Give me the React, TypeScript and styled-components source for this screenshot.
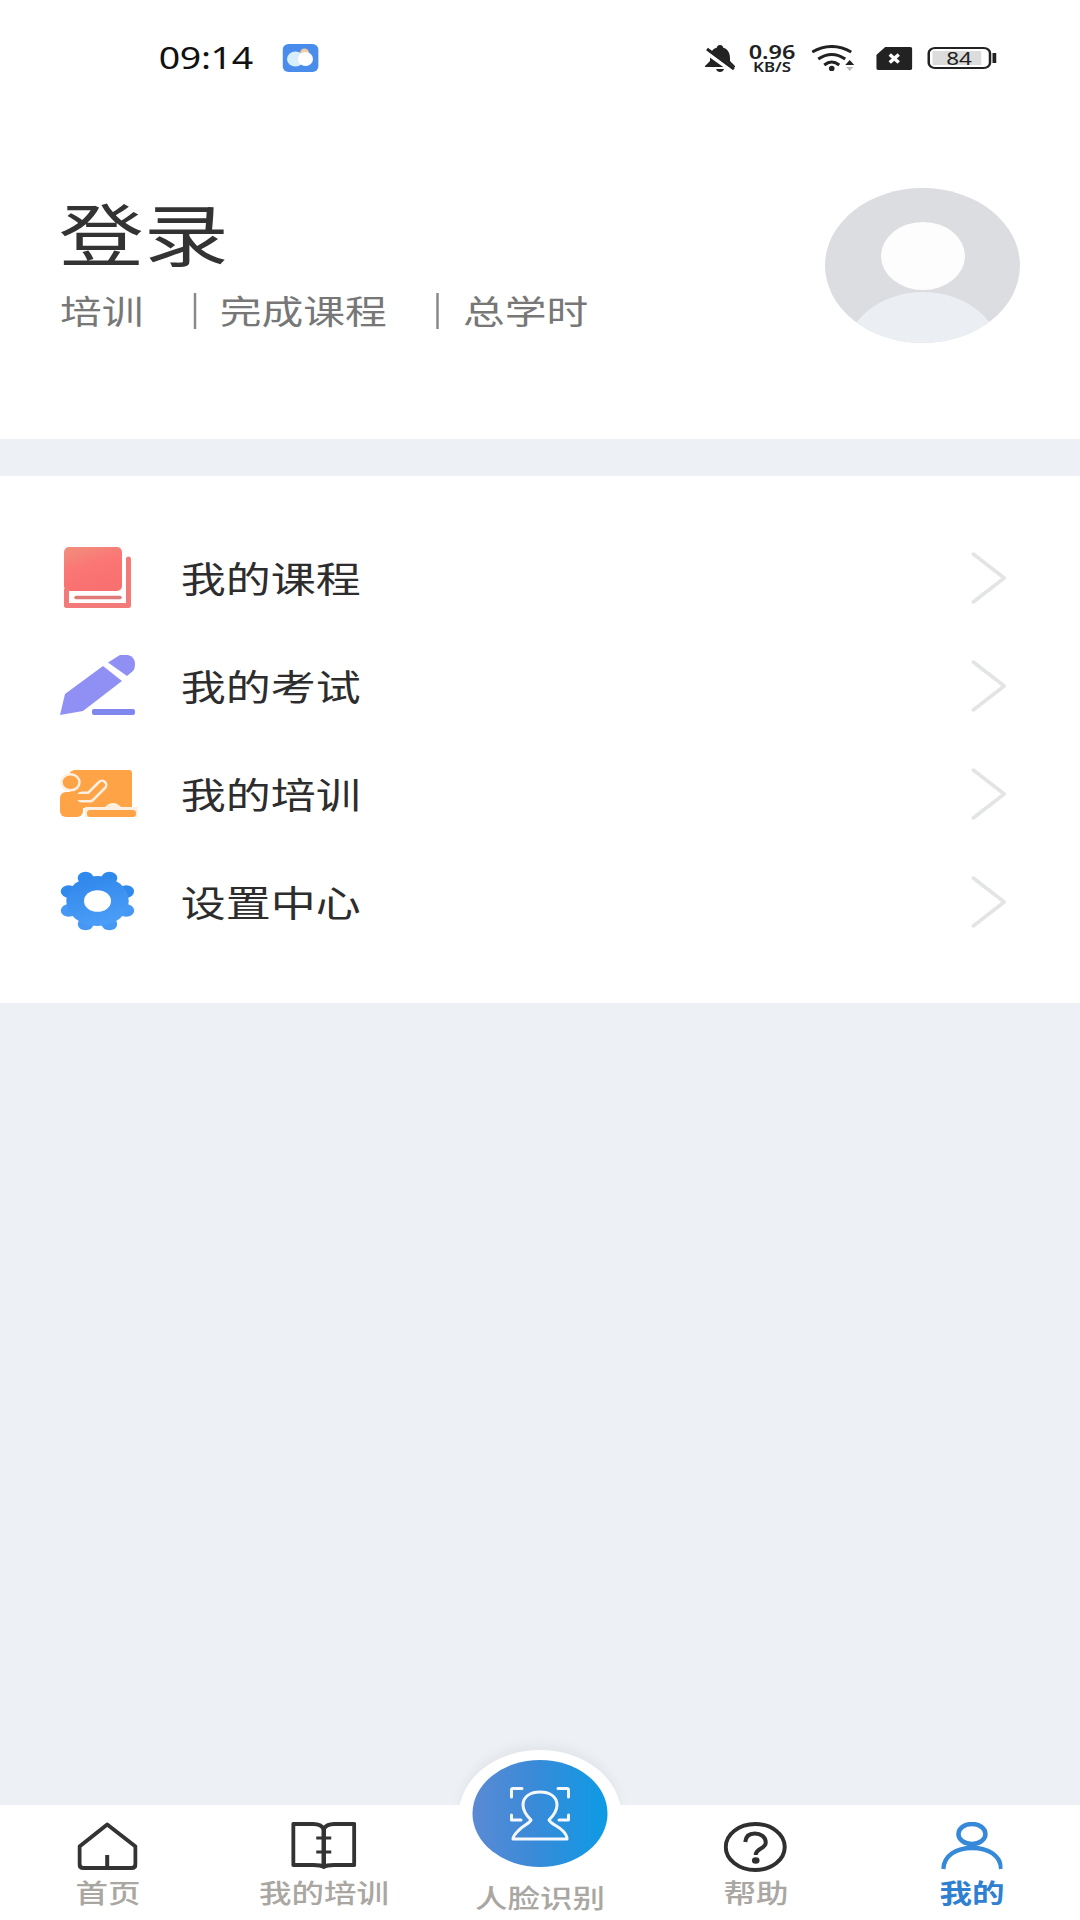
import React from "react";
import styled, { createGlobalStyle } from "styled-components";

const STRETCH = 1.25;
const SANS = `"Noto Sans", "Noto Sans CJK SC", sans-serif`;

const Global = createGlobalStyle`
  html, body { margin: 0; padding: 0; background: #fff; overflow: hidden; }
  * { box-sizing: border-box; }
`;

/* The reference is a phone capture widened by 1.25: the page is laid out at 864px and widened as a whole. */
const Page = styled.div`
  width: 864px;
  height: 1920px;
  display: flex;
  flex-direction: column;
  background: #edf0f5;
  font-family: ${SANS};
  transform: scaleX(${STRETCH});
  transform-origin: 0 0;
`;

const Top = styled.header`
  height: 439px;
  background: #fff;
  flex: none;
`;

const StatusBar = styled.div`
  height: 110px;
  padding: 44px 67px 0 127px;
  display: flex;
  justify-content: space-between;
  align-items: flex-start;
`;
const StatusGroup = styled.div<{ $gap: number }>`
  height: 28px;
  display: flex;
  align-items: center;
  gap: ${(p) => p.$gap}px;
`;
const Clock = styled.span`
  font-size: 30px;
  line-height: 28px;
  color: #111;
  letter-spacing: -0.3px;
`;
const BellSlot = styled.div`
  margin-right: -2px;
`;
const Speed = styled.div`
  width: 39px;
  display: flex;
  flex-direction: column;
  align-items: center;
  color: #222;
  font-weight: 600;
`;
const SpeedValue = styled.div`
  font-size: 18.8px;
  line-height: 18px;
`;
const SpeedUnit = styled.div`
  font-size: 13.5px;
  line-height: 12px;
`;
const WifiSlot = styled.div`
  margin-right: 5px;
`;
const Battery = styled.div`
  position: relative;
  width: 50.4px;
  height: 22px;
  margin-right: 4.5px;
  border: 2px solid #222;
  border-radius: 6px;
  display: flex;
  align-items: center;
  justify-content: center;
  font-size: 18px;
  line-height: 18px;
  color: #222;
  &::after {
    content: "";
    position: absolute;
    right: -6px;
    top: 4px;
    width: 2.4px;
    height: 10px;
    background: #222;
  }
`;
const Charge = styled.div<{ $level: number }>`
  position: absolute;
  left: 2px;
  top: 2px;
  bottom: 2px;
  width: ${(p) => p.$level}%;
  background: #dcdcdc;
`;
const BatteryValue = styled.span`
  position: relative;
`;

const Profile = styled.div`
  height: 329px;
  padding: 78px 48px 0 48px;
  display: flex;
  justify-content: space-between;
  align-items: flex-start;
`;
const Identity = styled.div`
  padding-top: 14px;
`;
const Title = styled.h1`
  margin: 0 0 0 -1px;
  font-size: 68px;
  line-height: 66px;
  font-weight: 400;
  color: #333;
`;
const Stats = styled.div`
  margin-top: 25px;
  display: flex;
`;
const Stat = styled.span`
  padding-right: 40px;
  font-size: 33.4px;
  line-height: 36px;
  color: #777;
  & + & {
    padding-left: 19px;
    border-left: 2px solid #8a8a8a;
  }
`;

const Menu = styled.nav`
  margin-top: 37px;
  padding: 48px 58px 47px 48px;
  background: #fff;
  flex: none;
`;
const Row = styled.div`
  height: 108px;
  display: flex;
  align-items: center;
`;
const RowIcon = styled.div`
  width: 96.6px;
  flex: none;
  display: flex;
`;
const RowLabel = styled.span`
  flex: 1;
  padding-top: 3px;
  font-size: 36px;
  line-height: 44px;
  color: #2d2d2d;
`;

const Spacer = styled.div`
  flex: 1;
`;

const TabBar = styled.footer`
  position: relative;
  height: 115px;
  flex: none;
  display: grid;
  grid-template-columns: repeat(5, 1fr);
  background: #fff;
`;
const Tab = styled.div`
  padding-top: 17px;
  display: flex;
  flex-direction: column;
  align-items: center;
`;
const TabIcon = styled.div`
  height: 52px;
  display: flex;
  align-items: flex-start;
`;
const TabLabel = styled.span<{ $active?: boolean }>`
  margin-top: 4px;
  font-size: 26px;
  line-height: 30px;
  font-weight: ${(p) => (p.$active ? 600 : 500)};
  color: ${(p) => (p.$active ? "#2f80d0" : "#aaa7a3")};
`;
const FaceTab = styled(Tab)`
  padding-top: 0;
`;
const Halo = styled.div`
  position: absolute;
  left: 50%;
  top: -55px;
  width: 130px;
  height: 130px;
  margin-left: -65px;
  border-radius: 50%;
  background: #fff;
  box-shadow: 0 -7px 9px rgba(0, 0, 0, 0.04);
  z-index: -1;
`;
const FaceButton = styled.div`
  width: 108px;
  height: 107px;
  margin-top: -45px;
  border-radius: 50%;
  display: flex;
  align-items: center;
  justify-content: center;
  background: linear-gradient(90deg, #5b8ad4 0%, #3a8ad8 45%, #0d9be5 100%);
`;
const FaceLabel = styled(TabLabel)`
  margin-top: 16px;
`;

/* Drawn in reference pixels: the width is narrowed here and widened back by the page. */
const Drawing = ({ w, h, children }: { w: number; h: number; children: React.ReactNode }) => (
  <svg width={w / STRETCH} height={h} viewBox={`0 0 ${w} ${h}`} preserveAspectRatio="none" style={{ display: "block", flex: "none" }}>
    {children}
  </svg>
);

const WeatherIcon = () => (
  <Drawing w={36} h={28}>
    <rect width={36} height={28} rx={6} fill="#4a8cec" />
    <circle cx={22} cy={9} r={4.5} fill="#f3c9a0" />
    <ellipse cx={13} cy={15} rx={8.5} ry={7.5} fill="#d9eefc" />
    <ellipse cx={23} cy={15} rx={7.5} ry={7} fill="#fff" />
  </Drawing>
);
const BellOff = () => (
  <Drawing w={30} h={29}>
    <path d="M15 1C17 1 18 2 18 3.5C23 5 25 9 25 14V17L30 22V23H0V22L5 17V14C5 9 7 5 12 3.5C12 2 13 1 15 1Z" fill="#222" />
    <path d="M11 25H19Q18 28 15 28Q12 28 11 25Z" fill="#222" />
    <path d="M1 7L29 27" stroke="#fff" strokeWidth={6} />
    <path d="M2 5L29 25" stroke="#222" strokeWidth={3} />
  </Drawing>
);
const Wifi = () => (
  <Drawing w={44} h={26}>
    <g fill="none" stroke="#222" strokeWidth={3}>
      <path d="M1 7Q20.5 -4 40 7" />
      <path d="M7 14Q20.5 5 34 14" />
      <path d="M13 20Q20.5 14 28 20" />
    </g>
    <circle cx={20.5} cy={23.5} r={2.8} fill="#222" />
    <path d="M34 20L38.5 15L43 20Z" fill="#222" />
    <path d="M35 22H42L38.5 26Z" fill="#bbb" />
  </Drawing>
);
const SimMissing = () => (
  <Drawing w={36} h={23}>
    <path d="M9 0H34Q36 0 36 2V21Q36 23 34 23H2Q0 23 0 21V8Z" fill="#222" />
    <path d="M13.5 7.5L22.5 15.5M22.5 7.5L13.5 15.5" stroke="#fff" strokeWidth={3.5} />
  </Drawing>
);
const Avatar = () => (
  <Drawing w={195} h={155}>
    <defs>
      <clipPath id="avatarClip">
        <ellipse cx={97.5} cy={77.5} rx={97.5} ry={77.5} />
      </clipPath>
    </defs>
    <g clipPath="url(#avatarClip)">
      <rect width={195} height={155} fill="#dcdde0" />
      <ellipse cx={98} cy={68} rx={42} ry={34} fill="#fdfdfd" />
      <ellipse cx={98} cy={170} rx={79} ry={66} fill="#ebeef3" />
    </g>
  </Drawing>
);

const BookIcon = () => (
  <Drawing w={78} h={64}>
    <defs>
      <linearGradient id="bookFill" x1="0" y1="0" x2="0.4" y2="1">
        <stop offset="0" stopColor="#f0907c" />
        <stop offset="0.5" stopColor="#fb7676" />
        <stop offset="1" stopColor="#f97070" />
      </linearGradient>
    </defs>
    <rect x={4} y={1} width={58} height={44} rx={5} fill="url(#bookFill)" />
    <path d="M68.5 13V59.5H6.5V44" fill="none" stroke="#f27a78" strokeWidth={5} strokeLinejoin="round" strokeLinecap="round" />
    <path d="M16 51.5H60" stroke="#e07a78" strokeWidth={3.5} strokeLinecap="round" />
  </Drawing>
);
const PencilIcon = () => (
  <Drawing w={78} h={64}>
    <path d="M0 61L5 40L43 12L62 27L23 57Z" fill="#9090f4" />
    <path d="M48 8.5L60 1H68Q75 3 75 10Q75 15 73 17L67 22Z" fill="#9090f4" />
    <rect x={32} y={55} width={43} height={6} rx={2} fill="#7f86ec" />
  </Drawing>
);
const BoardIcon = () => (
  <Drawing w={78} h={64}>
    <path d="M14 8H69Q72 8 72 11V46H10V10Z" fill="#ffa347" />
    <path d="M44 46Q53 36 62 46Z" fill="#fdf0e0" />
    <rect x={0} y={30} width={23} height={25} rx={6} fill="#ffa347" />
    <path d="M22 35H30L42 23" fill="none" stroke="#fdf0e0" strokeWidth={11} strokeLinecap="round" strokeLinejoin="round" />
    <path d="M16 35H30L42 23" fill="none" stroke="#ffa347" strokeWidth={6} strokeLinecap="round" strokeLinejoin="round" />
    <ellipse cx={10.5} cy={20.3} rx={9} ry={8} fill="#ffa347" stroke="#fdf0e0" strokeWidth={2.5} />
    <rect x={25} y={45} width={53} height={10} fill="#fdf0e0" />
    <rect x={27} y={48} width={49} height={7} rx={3} fill="#ffa347" />
  </Drawing>
);
const GearIcon = () => (
  <Drawing w={78} h={64}>
    <defs>
      <linearGradient id="gearFill" x1="0" y1="0" x2="0.3" y2="1">
        <stop offset="0" stopColor="#2e85ea" />
        <stop offset="1" stopColor="#4a9df6" />
      </linearGradient>
    </defs>
    <g transform="translate(37.5 31) scale(1.25 1)">
      {[0, 1, 2, 3, 4, 5, 6, 7].map((i) => (
        <line key={i} x1={0} y1={-18} x2={0} y2={-25} stroke={i < 2 || i > 5 ? "#3089ec" : "#4698f4"} strokeWidth={12.5} strokeLinecap="round" transform={`rotate(${22.5 + 45 * i})`} />
      ))}
      <circle r={25} fill="url(#gearFill)" />
      <circle r={10.8} fill="#fff" />
    </g>
  </Drawing>
);
const Chevron = () => (
  <Drawing w={36} h={52}>
    <path d="M2 2L33 26L2 50" fill="none" stroke="#e3e4e6" strokeWidth={3.5} strokeLinecap="round" strokeLinejoin="round" />
  </Drawing>
);

const HomeTabIcon = () => (
  <Drawing w={60} h={48}>
    <g fill="none" stroke="#333" strokeWidth={4} strokeLinejoin="round">
      <path d="M29.7 2.5L2 24.5V42Q2 46 6 46H54Q58 46 58 42V24.5Z" />
      <path d="M29.7 33V46" />
    </g>
  </Drawing>
);
const TrainingTabIcon = () => (
  <Drawing w={65} h={48}>
    <g fill="none" stroke="#333" strokeWidth={4} strokeLinejoin="round">
      <path d="M2 2H22Q30 2 32.5 7Q35 2 43 2H63V43H43Q35 43 32.5 45Q30 43 22 43H2Z" />
      <path d="M32.5 7V45" strokeWidth={4.5} />
      <path d="M25 16H40M25 30H40" strokeWidth={3} />
    </g>
  </Drawing>
);
const HelpTabIcon = () => (
  <Drawing w={64} h={51}>
    <ellipse cx={31.5} cy={25} rx={29.5} ry={23} fill="none" stroke="#2f2f2f" strokeWidth={4} />
    <path d="M21.5 20C22 14 26 11.5 31 11.5C37 11.5 42 15 42 20.5C42 27 32 26 32 33" fill="none" stroke="#2f2f2f" strokeWidth={4} />
    <ellipse cx={32} cy={38.5} rx={3.8} ry={3.2} fill="#2f2f2f" />
  </Drawing>
);
const MeTabIcon = () => (
  <Drawing w={62} h={48}>
    <g fill="none" stroke="#3589d8" strokeWidth={4.5}>
      <ellipse cx={30.7} cy={12} rx={13.5} ry={10} />
      <path d="M2 47C3 33 15 26 31 26C47 26 59 33 60 47" />
    </g>
  </Drawing>
);
const FaceScanIcon = () => (
  <Drawing w={60} h={54}>
    <g fill="none" stroke="#f4f8fd" strokeWidth={3} strokeLinejoin="round" strokeLinecap="round">
      <path d="M1.5 10V3Q1.5 1.5 3 1.5H12M48 1.5H57Q58.5 1.5 58.5 3V10M1.5 28V33H11M58.5 28V33H49" />
      <path d="M21 33C16 28 13 23 13 18C13 9 21 5 30 5C39 5 47 9 47 18C47 23 44 28 39 33C41 37 48 39 53 44C56 47 57 49 57 52H3C3 49 5 47 8 44C12 39 19 37 21 33Z" />
    </g>
  </Drawing>
);

const rows = [
  { label: "我的课程", icon: <BookIcon /> },
  { label: "我的考试", icon: <PencilIcon /> },
  { label: "我的培训", icon: <BoardIcon /> },
  { label: "设置中心", icon: <GearIcon /> },
];

export default function App() {
  return (
    <Page>
      <Global />
      <Top>
        <StatusBar>
          <StatusGroup $gap={24}>
            <Clock>09:14</Clock>
            <WeatherIcon />
          </StatusGroup>
          <StatusGroup $gap={12}>
            <BellSlot><BellOff /></BellSlot>
            <Speed>
              <SpeedValue>0.96</SpeedValue>
              <SpeedUnit>KB/S</SpeedUnit>
            </Speed>
            <WifiSlot><Wifi /></WifiSlot>
            <SimMissing />
            <Battery>
              <Charge $level={84} />
              <BatteryValue>84</BatteryValue>
            </Battery>
          </StatusGroup>
        </StatusBar>
        <Profile>
          <Identity>
            <Title>登录</Title>
            <Stats>
              <Stat>培训</Stat>
              <Stat>完成课程</Stat>
              <Stat>总学时</Stat>
            </Stats>
          </Identity>
          <Avatar />
        </Profile>
      </Top>
      <Menu>
        {rows.map((r) => (
          <Row key={r.label}>
            <RowIcon>{r.icon}</RowIcon>
            <RowLabel>{r.label}</RowLabel>
            <Chevron />
          </Row>
        ))}
      </Menu>
      <Spacer />
      <TabBar>
        <Halo />
        <Tab>
          <TabIcon><HomeTabIcon /></TabIcon>
          <TabLabel>首页</TabLabel>
        </Tab>
        <Tab>
          <TabIcon><TrainingTabIcon /></TabIcon>
          <TabLabel>我的培训</TabLabel>
        </Tab>
        <FaceTab>
          <FaceButton><FaceScanIcon /></FaceButton>
          <FaceLabel>人脸识别</FaceLabel>
        </FaceTab>
        <Tab>
          <TabIcon><HelpTabIcon /></TabIcon>
          <TabLabel>帮助</TabLabel>
        </Tab>
        <Tab>
          <TabIcon><MeTabIcon /></TabIcon>
          <TabLabel $active>我的</TabLabel>
        </Tab>
      </TabBar>
    </Page>
  );
}
